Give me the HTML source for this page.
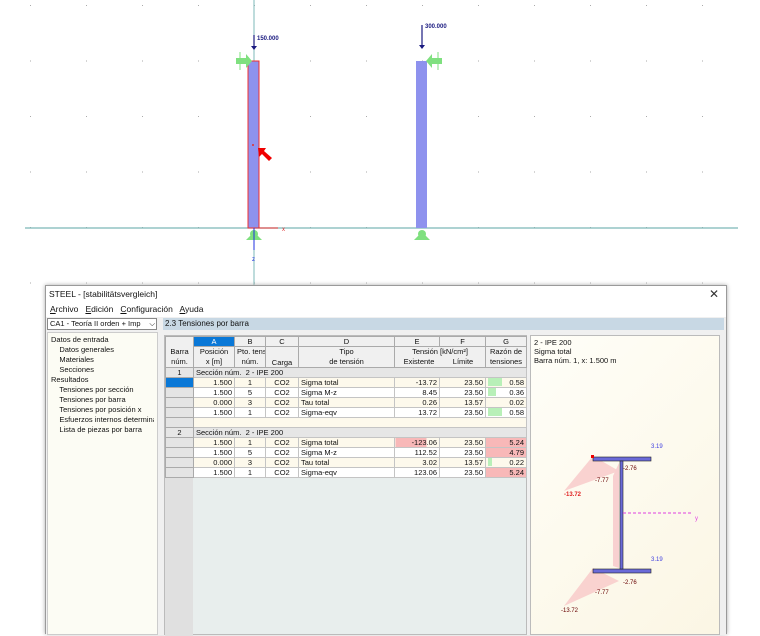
<!DOCTYPE html>
<html><head><meta charset="utf-8"><style>
*{margin:0;padding:0;box-sizing:border-box}
body{width:760px;height:634px;position:relative;overflow:hidden;background:#fff;font-family:"Liberation Sans",sans-serif;font-size:8px;color:#111}
.abs{position:absolute}
table{border-collapse:collapse;table-layout:fixed}
td{border:1px solid #c4c4c4;height:10px;line-height:9px;padding:0 2px;white-space:nowrap;overflow:hidden;font-size:7.5px}
.r{text-align:right}.c{text-align:center}
.rh{background:#e4e4e4;border-color:#aaa}
.hd td{background:#f0f0f0;text-align:center;border-color:#aaa}
.w{background:#fff}.y{background:#fdf9ec}
.sec td{background:#e6e6e6}
.tree div{white-space:nowrap;overflow:hidden;height:10px}
</style></head><body>
<svg class="abs" style="left:0;top:0" width="760" height="290">
<g id="dots" fill="#aaa"></g>
<line x1="25" y1="228" x2="738" y2="228" stroke="#7cb8b8" stroke-width="1.2"/>
<line x1="254" y1="0" x2="254" y2="290" stroke="#7cb8b8" stroke-width="1"/>
<rect x="248" y="61" width="11" height="167" fill="#8e92ee" stroke="#f03030" stroke-width="1"/>
<rect x="416" y="61" width="11" height="167" fill="#8e92ee"/>
<line x1="254" y1="35" x2="254" y2="48" stroke="#1a1a80" stroke-width="1.2"/><path d="M251 46 L254 50 L257 46Z" fill="#1a1a80"/>
<text x="257" y="40" font-size="6" font-weight="bold" fill="#1a1a80">150.000</text>
<line x1="422" y1="25" x2="422" y2="46" stroke="#1a1a80" stroke-width="1.2"/><path d="M419 45 L422 49 L425 45Z" fill="#1a1a80"/>
<text x="425" y="28" font-size="6" font-weight="bold" fill="#1a1a80">300.000</text>
<path d="M236 58 L246 58 L246 54 L252 61 L246 68 L246 64 L236 64Z" fill="#7fe07f"/>
<line x1="240" y1="52" x2="240" y2="70" stroke="#7fe07f"/>
<path d="M442 58 L432 58 L432 54 L426 61 L432 68 L432 64 L442 64Z" fill="#7fe07f"/>
<line x1="438" y1="52" x2="438" y2="70" stroke="#7fe07f"/>
<circle cx="254" cy="234" r="4" fill="#7fe07f"/><path d="M246 240 L254 232 L262 240Z" fill="#7fe07f"/>
<circle cx="422" cy="234" r="4" fill="#7fe07f"/><path d="M414 240 L422 232 L430 240Z" fill="#7fe07f"/>
<line x1="254" y1="228" x2="278" y2="228" stroke="#e03030" stroke-width="1"/><text x="282" y="231" font-size="6" fill="#e03030">x</text>
<line x1="254" y1="228" x2="254" y2="250" stroke="#2030e0" stroke-width="1"/><text x="252" y="261" font-size="6" fill="#2030e0">z</text>
<circle cx="253" cy="145" r="1" fill="#e03030"/>
<path d="M258 148 L266 148 L264 151 L272 158 L269 161 L262 154 L259 157Z" fill="#f00000"/>
</svg>
<div class="abs" style="left:45px;top:285px;width:682px;height:349px;background:#fff;border:1px solid #9a9a9a;box-shadow:0 0 4px #aaa">
 <div class="abs" style="left:3px;top:3px;font-size:8.5px">STEEL - [stabilitätsvergleich]</div>
 <div class="abs" style="right:7px;top:1px;font-size:12px;color:#333">✕</div>
 <div class="abs" style="left:4px;top:18px;font-size:8.5px"><u>A</u>rchivo &nbsp; <u>E</u>dición &nbsp; <u>C</u>onfiguración &nbsp; <u>A</u>yuda</div>
 <div class="abs" style="left:0;top:31px;width:680px;height:318px;background:#f0f0f0"></div>
 <div class="abs" style="left:1px;top:32px;width:110px;height:12px;border:1px solid #888;background:#fff;font-size:7.5px;padding-left:2px;line-height:10px;white-space:nowrap;overflow:hidden">CA1 - Teoría II orden + Imp<span style="position:absolute;right:1px;top:0;background:#fff;padding-left:2px">⌵</span></div>
 <div class="abs" style="left:117px;top:32px;width:561px;height:12px;background:#c8d8e4;font-size:8px;padding-left:2px;line-height:12px">2.3 Tensiones por barra</div>
 <div class="abs tree" style="left:1px;top:46px;width:111px;height:303px;background:#fcfcf4;border:1px solid #ccc;font-size:7.5px;line-height:10px;padding:2px 3px">
  <div>Datos de entrada</div><div>&nbsp;&nbsp;&nbsp;&nbsp;Datos generales</div><div>&nbsp;&nbsp;&nbsp;&nbsp;Materiales</div><div>&nbsp;&nbsp;&nbsp;&nbsp;Secciones</div><div>Resultados</div><div>&nbsp;&nbsp;&nbsp;&nbsp;Tensiones por sección</div><div>&nbsp;&nbsp;&nbsp;&nbsp;Tensiones por barra</div><div>&nbsp;&nbsp;&nbsp;&nbsp;Tensiones por posición x</div><div>&nbsp;&nbsp;&nbsp;&nbsp;Esfuerzos internos determinant</div><div>&nbsp;&nbsp;&nbsp;&nbsp;Lista de piezas por barra</div>
 </div>
 <div class="abs" style="left:118px;top:49px;width:363px;height:300px;background:#e8eeed;border:1px solid #bbb">
  <div class="abs" style="left:0;top:0;width:28px;height:300px;background:#e0e0e0"></div>
 </div>
 <table class="abs" style="left:119px;top:50px;width:361px">
 <colgroup><col style="width:28px"><col style="width:41px"><col style="width:31px"><col style="width:33px"><col style="width:96px"><col style="width:45px"><col style="width:46px"><col style="width:41px"></colgroup>
 <tr class="hd"><td style="background:#f0f0f0;border-bottom:none"></td><td style="background:#0a78d7;color:#fff">A</td><td>B</td><td>C</td><td>D</td><td>E</td><td>F</td><td>G</td></tr>
 <tr class="hd"><td style="border-top:none;height:20px;line-height:10px">Barra<br>núm.</td><td style="line-height:10px">Posición<br>x [m]</td><td style="line-height:10px">Pto. tens.<br>núm.</td><td style="vertical-align:bottom">Carga</td><td style="line-height:10px">Tipo<br>de tensión</td><td colspan="2" style="line-height:10px">Tensión [kN/cm²]<br><span style="display:inline-block;width:44px">Existente</span><span style="display:inline-block;width:44px">Límite</span></td><td style="line-height:10px">Razón de<br>tensiones</td></tr>
 <tr class="sec"><td class="rh c">1</td><td colspan="7">Sección núm.&nbsp; 2 - IPE 200</td></tr>
 <tr class="y"><td class="rh" style="background:#0a78d7"></td><td class="r">1.500</td><td class="c">1</td><td class="c">CO2</td><td>Sigma total</td><td class="r">-13.72</td><td class="r">23.50</td><td class="r"><span style="float:left;background:#b8f0b8;width:14px;height:8px"></span>0.58</td></tr>
 <tr class="w"><td class="rh"></td><td class="r">1.500</td><td class="c">5</td><td class="c">CO2</td><td>Sigma M-z</td><td class="r">8.45</td><td class="r">23.50</td><td class="r"><span style="float:left;background:#b8f0b8;width:8px;height:8px"></span>0.36</td></tr>
 <tr class="y"><td class="rh"></td><td class="r">0.000</td><td class="c">3</td><td class="c">CO2</td><td>Tau total</td><td class="r">0.26</td><td class="r">13.57</td><td class="r">0.02</td></tr>
 <tr class="w"><td class="rh"></td><td class="r">1.500</td><td class="c">1</td><td class="c">CO2</td><td>Sigma-eqv</td><td class="r">13.72</td><td class="r">23.50</td><td class="r"><span style="float:left;background:#b8f0b8;width:14px;height:8px"></span>0.58</td></tr>
 <tr class="y"><td class="rh"></td><td colspan="7"></td></tr>
 <tr class="sec"><td class="rh c">2</td><td colspan="7">Sección núm.&nbsp; 2 - IPE 200</td></tr>
 <tr class="y"><td class="rh"></td><td class="r">1.500</td><td class="c">1</td><td class="c">CO2</td><td>Sigma total</td><td class="r" style="background:linear-gradient(90deg,#f8b8b8 70%,#fdf9ec 70%)">-123.06</td><td class="r">23.50</td><td class="r" style="background:#f8b8b8">5.24</td></tr>
 <tr class="w"><td class="rh"></td><td class="r">1.500</td><td class="c">5</td><td class="c">CO2</td><td>Sigma M-z</td><td class="r">112.52</td><td class="r">23.50</td><td class="r" style="background:#f8b8b8">4.79</td></tr>
 <tr class="y"><td class="rh"></td><td class="r">0.000</td><td class="c">3</td><td class="c">CO2</td><td>Tau total</td><td class="r">3.02</td><td class="r">13.57</td><td class="r"><span style="float:left;background:#b8f0b8;width:4px;height:8px"></span>0.22</td></tr>
 <tr class="w"><td class="rh"></td><td class="r">1.500</td><td class="c">1</td><td class="c">CO2</td><td>Sigma-eqv</td><td class="r">123.06</td><td class="r">23.50</td><td class="r" style="background:#f8b8b8">5.24</td></tr>
 </table>
 <div class="abs" style="left:484px;top:49px;width:190px;height:300px;background:linear-gradient(135deg,#fffef8,#fbf6e4);border:1px solid #bbb;font-size:7.5px;line-height:9px;padding:2px 3px">2 - IPE 200<br>Sigma total<br>Barra núm. 1, x: 1.500 m
  <svg class="abs" style="left:0;top:0" width="190" height="300">
   <path d="M62 120 L33 155 L88 135Z" fill="#f8c8c8" opacity=".8"/>
   <path d="M62 232 L33 270 L88 245Z" fill="#f8c8c8" opacity=".8"/>
   <path d="M88 127 L82 140 L82 230 L88 232Z" fill="#f8d0d0"/>
   <rect x="62" y="121" width="58" height="4" fill="#6a6ad8" stroke="#222" stroke-width=".6"/>
   <rect x="62" y="233" width="58" height="4" fill="#6a6ad8" stroke="#222" stroke-width=".6"/>
   <rect x="89" y="125" width="3" height="108" fill="#6a6ad8" stroke="#222" stroke-width=".6"/>
   <line x1="92" y1="177" x2="160" y2="177" stroke="#e040e0" stroke-dasharray="3,2"/>
   <text x="164" y="184" font-size="6" fill="#e040e0">y</text>
   <text x="33" y="160" font-size="6" fill="#e02020" font-weight="bold">-13.72</text>
   <text x="30" y="276" font-size="6" fill="#600">-13.72</text>
   <text x="120" y="112" font-size="6" fill="#4040e0">3.19</text>
   <text x="120" y="225" font-size="6" fill="#4040e0">3.19</text>
   <text x="64" y="146" font-size="6" fill="#600">-7.77</text>
   <text x="92" y="134" font-size="6" fill="#600">-2.76</text>
   <text x="64" y="258" font-size="6" fill="#600">-7.77</text>
   <text x="92" y="248" font-size="6" fill="#600">-2.76</text>
   <rect x="60" y="119" width="3" height="3" fill="#e00"/>
  </svg>
 </div>
</div>
<script>
var g=document.getElementById('dots'),s='';
for(var x=30;x<738;x+=56)for(var y=5;y<290;y+=55.5)s+='<rect x="'+x+'" y="'+y+'" width="1" height="1"/>';
g.innerHTML=s;
</script>
</body></html>
